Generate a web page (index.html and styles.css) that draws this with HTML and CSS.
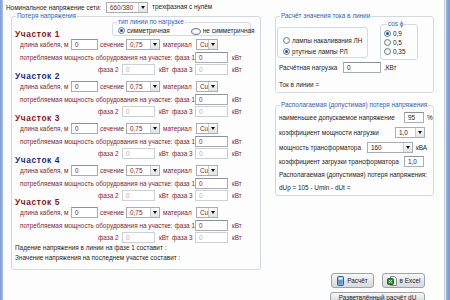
FILE: index.html
```html
<!DOCTYPE html>
<html lang="ru">
<head>
<meta charset="utf-8">
<link rel="stylesheet" href="styles.css">
</head>
<body>
<div class="window">
  <div class="frame-l"></div>
  <div class="client">
    <div class="toprow">
      <span class="top-lbl">Номинальное напряжение сети:</span>
      <div class="combo c-net"><span class="cv">660/380</span><span class="arr"></span></div>
      <span class="top-type">трехфазная с нулём</span>
    </div>
    <div class="main">
      <div class="fs left-fs">
        <span class="legend">Потеря напряжения</span>

        <div class="sec red">
          <div class="head">
            <span class="title">Участок 1</span>
            <div class="fs type-fs">
              <span class="legend">тип линии по нагрузке</span>
              <span class="radio on"></span><span class="rt">симметричная</span>
              <span class="radio r2"></span><span class="rt">не симметричная</span>
            </div>
          </div>
          <div class="row r1"><span class="l-len">длина кабеля, м</span><span class="inp i-len">0</span><span class="l-sec">сечение</span><div class="combo c-sec"><span class="cv">0,75</span><span class="arr"></span></div><span class="l-mat">материал</span><div class="combo c-mat"><span class="cv">Cu</span><span class="arr"></span></div></div>
          <div class="row r2"><span class="l-pow">потребляемая мощность оборудования на участке: фаза 1</span><span class="inp i-ph">0</span><span class="kw">кВт</span></div>
          <div class="row r3"><span class="l-f2">фаза 2</span><span class="inp i-ph dis">0</span><span class="kw2">кВт</span><span class="l-f3">фаза 3</span><span class="inp i-ph dis">0</span><span class="kw">кВт</span></div>
        </div>

        <div class="sec blue">
          <div class="head"><span class="title">Участок 2</span></div>
          <div class="row r1"><span class="l-len">длина кабеля, м</span><span class="inp i-len">0</span><span class="l-sec">сечение</span><div class="combo c-sec"><span class="cv">0,75</span><span class="arr"></span></div><span class="l-mat">материал</span><div class="combo c-mat"><span class="cv">Cu</span><span class="arr"></span></div></div>
          <div class="row r2"><span class="l-pow">потребляемая мощность оборудования на участке: фаза 1</span><span class="inp i-ph">0</span><span class="kw">кВт</span></div>
          <div class="row r3"><span class="l-f2">фаза 2</span><span class="inp i-ph dis">0</span><span class="kw2">кВт</span><span class="l-f3">фаза 3</span><span class="inp i-ph dis">0</span><span class="kw">кВт</span></div>
        </div>

        <div class="sec red">
          <div class="head"><span class="title">Участок 3</span></div>
          <div class="row r1"><span class="l-len">длина кабеля, м</span><span class="inp i-len">0</span><span class="l-sec">сечение</span><div class="combo c-sec"><span class="cv">0,75</span><span class="arr"></span></div><span class="l-mat">материал</span><div class="combo c-mat"><span class="cv">Cu</span><span class="arr"></span></div></div>
          <div class="row r2"><span class="l-pow">потребляемая мощность оборудования на участке: фаза 1</span><span class="inp i-ph">0</span><span class="kw">кВт</span></div>
          <div class="row r3"><span class="l-f2">фаза 2</span><span class="inp i-ph dis">0</span><span class="kw2">кВт</span><span class="l-f3">фаза 3</span><span class="inp i-ph dis">0</span><span class="kw">кВт</span></div>
        </div>

        <div class="sec blue">
          <div class="head"><span class="title">Участок 4</span></div>
          <div class="row r1"><span class="l-len">длина кабеля, м</span><span class="inp i-len">0</span><span class="l-sec">сечение</span><div class="combo c-sec"><span class="cv">0,75</span><span class="arr"></span></div><span class="l-mat">материал</span><div class="combo c-mat"><span class="cv">Cu</span><span class="arr"></span></div></div>
          <div class="row r2"><span class="l-pow">потребляемая мощность оборудования на участке: фаза 1</span><span class="inp i-ph">0</span><span class="kw">кВт</span></div>
          <div class="row r3"><span class="l-f2">фаза 2</span><span class="inp i-ph dis">0</span><span class="kw2">кВт</span><span class="l-f3">фаза 3</span><span class="inp i-ph dis">0</span><span class="kw">кВт</span></div>
        </div>

        <div class="sec red">
          <div class="head"><span class="title">Участок 5</span></div>
          <div class="row r1"><span class="l-len">длина кабеля, м</span><span class="inp i-len">0</span><span class="l-sec">сечение</span><div class="combo c-sec"><span class="cv">0,75</span><span class="arr"></span></div><span class="l-mat">материал</span><div class="combo c-mat"><span class="cv">Cu</span><span class="arr"></span></div></div>
          <div class="row r2"><span class="l-pow">потребляемая мощность оборудования на участке: фаза 1</span><span class="inp i-ph">0</span><span class="kw">кВт</span></div>
          <div class="row r3"><span class="l-f2">фаза 2</span><span class="inp i-ph dis">0</span><span class="kw2">кВт</span><span class="l-f3">фаза 3</span><span class="inp i-ph dis">0</span><span class="kw">кВт</span></div>
        </div>

        <div class="res first">Падение напряжения в линии на фазе 1 составит :</div>
        <div class="res">Значение напряжения на последнем участке составит :</div>
      </div>

      <div class="rightcol">
        <div class="fs cur-fs">
          <span class="legend">Расчёт значения тока в линии</span>
          <div class="groups">
            <div class="fs lamp-fs">
              <div class="rrow"><span class="radio"></span><span class="rt">лампы накаливания ЛН</span></div>
              <div class="rrow"><span class="radio on"></span><span class="rt">ртутные лампы РЛ</span></div>
            </div>
            <div class="fs cos-fs">
              <span class="legend">cos ϕ</span>
              <div class="crow"><span class="radio on"></span><span class="rt">0,9</span></div>
              <div class="crow"><span class="radio"></span><span class="rt">0,5</span></div>
              <div class="crow"><span class="radio"></span><span class="rt">0,35</span></div>
            </div>
          </div>
          <div class="prow load"><span class="l-load">Расчётная нагрузка</span><span class="inp i-load">0</span><span class="unit">,КВт</span></div>
          <div class="prow tok">Ток в линии =</div>
        </div>

        <div class="fs dop-fs">
          <span class="legend">Располагаемая (допустимая) потеря напряжения</span>
          <div class="prow q1"><span class="l-q1">наименьшее допускаемое напряжение</span><span class="inp i-q1">95</span><span class="unit">%</span></div>
          <div class="prow q2"><span class="l-q2">коэффициент мощности нагрузки</span><div class="combo c-q2"><span class="cv">1,0</span><span class="arr"></span></div></div>
          <div class="prow q3"><span class="l-q3">мощность трансформатора</span><div class="combo c-q3"><span class="cv">160</span><span class="arr"></span></div><span class="unit">кВА</span></div>
          <div class="prow q4"><span class="l-q1">коэффициент загрузки трансформатора</span><span class="inp i-q1">1,0</span></div>
          <div class="txt t1">Располагаемая (допустимая) потеря напряжения:</div>
          <div class="txt t2">dUp = 105 - Umin - dUt =</div>
        </div>

        <div class="btns">
          <div class="btn b-calc">
            <svg class="ico" width="7" height="10" viewBox="0 0 7 10"><rect x="0.5" y="0.5" width="6" height="9" rx="1" fill="#7fb0e8" stroke="#2f5f9e"/><rect x="1.5" y="1.5" width="4" height="2" fill="#e8f2fc"/><path d="M1.5 5h1M3.5 5h1M1.5 7h1M3.5 7h1" stroke="#1f4f8e"/></svg>
            <span>Расчёт</span>
          </div>
          <div class="btn b-xls">
            <svg class="ico" width="10" height="10" viewBox="0 0 10 10"><path d="M3.5 0.5h4l2 2v7h-6z" fill="#f4f4f4" stroke="#888"/><rect x="0.5" y="2.5" width="6" height="6" rx="1" fill="#2e8b3a" stroke="#1e6a28"/><path d="M2 4l3 3M5 4l-3 3" stroke="#fff" stroke-width="0.9"/></svg>
            <span>в Excel</span>
          </div>
        </div>
        <div class="btn b-branch"><span>Разветвлённый расчёт dU</span></div>
      </div>
    </div>
  </div>
  <div class="frame-r"></div>
</div>
</body>
</html>
```

FILE: styles.css
```css
* { box-sizing: border-box; }
html, body { margin: 0; padding: 0; background: #fff; }
body {
  font-family: "Liberation Sans", Arial, sans-serif;
  font-size: 6.4px;
  color: #1e1e1e;
  overflow: hidden;
}
.window {
  width: 450px;
  height: 300px;
  display: flex;
  overflow: hidden;
  background: #fdfdfd;
}
.frame-l {
  width: 3px;
  background: linear-gradient(to right, #7d9bd0, #a9c0e6);
  flex: none;
}
.frame-r {
  width: 6px;
  flex: none;
  border-left: 1px solid #c3cedc;
  background: linear-gradient(to right, #e6edf6 0 1px, #9ab3dc 1px, #7495cd);
}
.client {
  width: 441px;
  flex: none;
  padding-top: 1px;
}
.toprow {
  height: 13px;
  display: grid;
  grid-template-columns: 100px 42px auto;
  align-items: center;
  justify-content: start;
  padding-left: 3px;
}
.top-lbl { white-space: nowrap; }
.c-net { width: 42px; }
.top-type { margin-left: 4px; margin-top: -2px; white-space: nowrap; }

.main { display: flex; margin-top: 2px; align-items: flex-start; }

/* group boxes */
.fs {
  position: relative;
  border: 1px solid #d3dae3;
  border-radius: 3px;
}
.legend {
  position: absolute;
  top: -5px;
  left: 4px;
  background: #fdfdfd;
  padding: 0 1px;
  line-height: 8px;
  color: #2f64b7;
  white-space: nowrap;
}

/* inputs */
.inp {
  display: block;
  height: 11px;
  border: 1px solid #a8aeb6;
  border-top-color: #8d939b;
  background: #fff;
  padding-left: 3px;
  line-height: 9px;
  color: #8a2020;
  flex: none;
}
.inp.dis { color: #b2b2b2; border-color: #cdd0d4; }
.combo {
  display: flex;
  height: 11px;
  border: 1px solid #a8aeb6;
  background: #fff;
  flex: none;
}
.combo .cv {
  flex: 1;
  padding-left: 3px;
  line-height: 9px;
  color: #8a2020;
  white-space: nowrap;
}
.combo .arr {
  width: 9px;
  flex: none;
  border-left: 1px solid #c9ccd0;
  background: linear-gradient(#fafafa, #e2e2e2);
  position: relative;
}
.combo .arr::after {
  content: "";
  position: absolute;
  left: 2px;
  top: 3px;
  border-left: 2.5px solid transparent;
  border-right: 2.5px solid transparent;
  border-top: 3px solid #111;
}

/* radios */
.radio {
  display: inline-block;
  width: 7px;
  height: 7px;
  border-radius: 50%;
  border: 1px solid #6f7c8c;
  background: radial-gradient(#fff, #e0e4ea);
  position: relative;
  flex: none;
}
.radio.on::after {
  content: "";
  position: absolute;
  left: 1px;
  top: 1px;
  width: 3px;
  height: 3px;
  border-radius: 50%;
  background: #1c56b0;
}
.rt { margin-left: 2px; white-space: nowrap; }

/* left fieldset */
.left-fs {
  margin-left: 8px;
  width: 250px;
  height: 254px;
  padding-top: 13px;
  flex: none;
}
.sec {
  display: flex;
  flex-direction: column;
  margin-bottom: -3px;
}
.head {
  height: 8px;
  display: flex;
  align-items: flex-end;
  padding-left: 3px;
}
.title {
  font-weight: bold;
  font-size: 8.4px;
  letter-spacing: 0.6px;
  line-height: 8px;
  white-space: nowrap;
}
.red .title { color: #8c1515; }
.blue .title { color: #1f2a7c; }
.row span[class^="l-"], .kw, .kw2 { color: #85262b; }
.blue .l-len, .blue .l-sec, .blue .l-mat { color: #2b2d6e; }

.type-fs {
  margin-left: auto;
  margin-right: 9px;
  width: 139px;
  height: 14px;
  flex: none;
  display: flex;
  align-items: center;
  padding: 3px 0 0 5px;
  margin-bottom: 2px;
}
.type-fs .r2 { margin-left: 21px; }

.row {
  height: 11px;
  display: flex;
  align-items: center;
  white-space: nowrap;
}
.r1 { margin-top: 1px; padding-left: 8px; }
.r2 { margin-top: 2px; padding-left: 8px; }
.r3 { margin-top: 1px; padding-left: 86px; }
.l-len { width: 51px; }
.i-len { width: 27px; }
.l-sec { width: 28px; padding-left: 2px; }
.c-sec { width: 34px; }
.l-mat { width: 36px; padding-left: 3px; }
.c-mat { width: 22px; }
.l-pow { width: 175px; }
.i-ph { width: 33px; }
.kw { margin-left: 4px; }
.l-f2 { width: 24px; }
.kw2 { width: 17px; padding-left: 4px; }
.l-f3 { width: 23px; }

.res { line-height: 10px; padding-left: 3px; white-space: nowrap; }
.res.first { margin-top: 3px; }

/* right column */
.rightcol { margin-left: 14px; width: 159px; flex: none; }
.cur-fs { height: 77px; padding-left: 3px; }
.groups { display: flex; align-items: flex-start; margin-top: 7px; margin-left: -2px; }
.lamp-fs {
  margin-top: 3px;
  width: 91px;
  height: 31px;
  padding: 7px 0 0 5px;
}
.rrow { height: 11px; display: flex; align-items: center; }
.cos-fs {
  margin-left: 12px;
  width: 38px;
  height: 36px;
  padding: 4px 0 0 3px;
}
.cos-fs .legend { left: 6px; }
.crow { height: 9px; display: flex; align-items: center; }

.prow { height: 11px; display: flex; align-items: center; white-space: nowrap; }
.prow .inp { color: #222; }
.prow .combo .cv { color: #222; }
.load { margin-top: 2px; }
.l-load { width: 64px; }
.i-load { width: 38px; }
.unit { margin-left: 3px; }
.tok { margin-top: 6px; height: 10px; }

.dop-fs { margin-top: 12px; height: 91px; padding-left: 3px; }
.q1 { margin-top: 6px; }
.q2 { margin-top: 4px; }
.q3 { margin-top: 4px; }
.q4 { margin-top: 3px; }
.l-q1 { width: 125px; }
.i-q1 { width: 20px; }
.l-q2 { width: 116px; }
.c-q2 { width: 30px; }
.l-q3 { width: 88px; }
.c-q3 { width: 46px; }
.txt { line-height: 10px; white-space: nowrap; }
.t1 { margin-top: 3px; }
.t2 { margin-top: 3px; }

.btns { display: flex; margin-top: 77px; margin-left: 56px; gap: 8px; }
.btn {
  height: 15px;
  border: 1px solid #9da3aa;
  border-radius: 3px;
  background: linear-gradient(#f8f8f8, #e6e6e6 50%, #d9d9d9);
  display: flex;
  align-items: center;
  justify-content: center;
  gap: 3px;
  color: #1b1b2e;
  white-space: nowrap;
}
.b-calc, .b-xls { width: 43px; }
.b-branch { width: 95px; height: 12px; margin-left: 55px; margin-top: 4px; align-items: flex-start; padding-top: 1px; }
.ico { flex: none; }
```
